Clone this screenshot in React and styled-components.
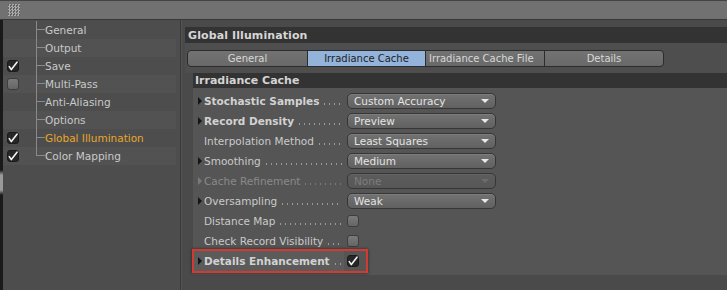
import React from "react";
import styled, { createGlobalStyle, css } from "styled-components";

const Global = createGlobalStyle`
  html, body { margin: 0; padding: 0; background: #4a4a4a; overflow: hidden; }
  * { box-sizing: border-box; }
`;

const Frame = styled.div`
  width: 727px;
  height: 290px;
  display: flex;
  flex-direction: column;
  font-family: "DejaVu Sans", "Liberation Sans", sans-serif;
  font-size: 10px;
  color: #cfcfcf;
  background: #4a4a4a;
`;

const TitleBar = styled.div`
  height: 20px;
  flex: none;
  background: #717171;
  border-top: 1px solid #444;
  border-bottom: 1px solid #383838;
  display: flex;
  align-items: center;
  padding-left: 8px;
`;

const Grip = styled.div`
  width: 12px;
  height: 12px;
  background-image: repeating-conic-gradient(#b4b4b4 0 25%, #5e5e5e 0 50%);
  background-size: 3px 3px;
  opacity: 0.85;
`;

const Main = styled.div`
  flex: 1;
  display: flex;
  min-height: 0;
`;

const LeftEdge = styled.div`
  width: 3px;
  flex: none;
  background: linear-gradient(#1a1a1a 0 150px, #9a9a9a 155px 170px, #1a1a1a 175px);
`;

const Sidebar = styled.div`
  width: 178px;
  flex: none;
  background: #4d4d4d;
  border-right: 1px solid #393939;
  padding-top: 1px;
  display: flex;
  flex-direction: column;
`;

const TreeRow = styled.div`
  height: 18px;
  display: flex;
  align-items: center;
  background: ${(p) => (p.$odd ? "#525252" : "#4d4d4d")};
  margin-right: 4px;
`;

const CheckCell = styled.div`
  width: 33px;
  flex: none;
  display: flex;
  align-items: center;
  padding-left: 4px;
`;

const Branch = styled.div`
  position: relative;
  width: 9px;
  height: 18px;
  flex: none;
  border-left: 1px solid #8a8a8a;
  ${(p) =>
    p.$last &&
    css`
      height: 9px;
      align-self: flex-start;
    `}
  &::after {
    content: "";
    position: absolute;
    left: 0;
    top: 8px;
    width: 8px;
    border-top: 1px solid #8a8a8a;
  }
`;

const TreeLabel = styled.span`
  color: ${(p) => (p.$active ? "#e9a62a" : "#c9c9c9")};
  font-size: 10.5px;
  white-space: nowrap;
`;

const Box = styled.div`
  position: relative;
  width: 12px;
  height: 12px;
  border-radius: 3px;
  flex: none;
  display: flex;
  align-items: center;
  justify-content: center;
  ${(p) =>
    p.$checked
      ? css`
          background: #262626;
          border: 1px solid #1a1a1a;
        `
      : css`
          background: linear-gradient(#7a7a7a, #666);
          border: 1px solid #3d3d3d;
        `}
`;

const Check = () => (
  <svg width="10" height="10" viewBox="0 0 10 10">
    <path d="M1.3 5.6 L3.3 8.6 L9 1.2" stroke="#f2f2f2" strokeWidth="1.6" fill="none" strokeLinecap="round" strokeLinejoin="round" />
  </svg>
);

const RightPanel = styled.div`
  flex: 1;
  display: flex;
  flex-direction: column;
  padding: 7px 0 0 3px;
  background: #4a4a4a;
  border-left: 1px solid #545454;
`;

const Header = styled.div`
  height: 16px;
  background: #333;
  color: #d6d6d6;
  font-size: 11px;
  font-weight: bold;
  display: flex;
  align-items: center;
  padding-left: 3px;
  letter-spacing: 0.1px;
`;

const TabStrip = styled.div`
  display: flex;
  padding: 7px 0 6px 3px;
  background: #4e4e4e;
`;

const Tab = styled.div`
  width: ${(p) => p.$w}px;
  height: 17px;
  display: flex;
  align-items: center;
  justify-content: ${(p) => (p.$left ? "flex-start" : "center")};
  padding-left: ${(p) => (p.$left ? "3px" : "0")};
  border: 1px solid #2c2c2c;
  margin-left: -1px;
  background: ${(p) => (p.$sel ? "#93b3da" : "linear-gradient(#737373, #686868)")};
  color: ${(p) => (p.$sel ? "#1e1e1e" : "#d8d8d8")};
  white-space: nowrap;
  ${(p) => p.$first && css`border-radius: 4px 0 0 4px;`}
  ${(p) => p.$last && css`border-radius: 0 4px 4px 0;`}
`;

const Section = styled.div`
  margin-left: 8px;
  display: flex;
  flex-direction: column;
`;

const SectionHeader = styled.div`
  height: 15px;
  background: #333;
  color: #d4d4d4;
  font-size: 11px;
  font-weight: bold;
  display: flex;
  align-items: center;
  padding-left: 2px;
`;

const Content = styled.div`
  height: 187px;
  background: #555;
  padding-top: 3px;
  display: flex;
  flex-direction: column;
`;

const Row = styled.div`
  position: relative;
  height: 20px;
  display: flex;
  align-items: center;
  padding-left: 5px;
`;

const Twisty = styled.div`
  position: relative;
  width: 0;
  height: 0;
  border-top: 4px solid transparent;
  border-bottom: 4px solid transparent;
  border-left: 4px solid ${(p) => (p.$dim ? "#7a7a7a" : "#151515")};
  visibility: ${(p) => (p.$hide ? "hidden" : "visible")};
  margin-right: 2px;
  flex: none;
`;

const LabelCell = styled.div`
  position: relative;
  width: 143px;
  flex: none;
  display: flex;
  align-items: baseline;
  padding-right: 5px;
  overflow: hidden;
`;

const LabelText = styled.span`
  white-space: nowrap;
  font-size: 10.5px;
  font-weight: ${(p) => (p.$bold ? "bold" : "normal")};
  color: ${(p) => (p.$dim ? "#8a8a8a" : p.$bold ? "#d2d2d2" : "#cacaca")};
`;

const Leader = styled.span`
  flex: 1;
  height: 2px;
  margin-left: 3px;
  background-image: radial-gradient(circle, ${(p) => (p.$dim ? "#777" : "#9a9a9a")} 0 0.7px, transparent 0.9px);
  background-size: 5px 2px;
  background-repeat: repeat-x;
  background-position: left center;
`;

const Dropdown = styled.div`
  width: 149px;
  height: 16px;
  border-radius: 5px;
  border: 1px solid #363636;
  background: ${(p) => (p.$disabled ? "linear-gradient(#5c5c5c, #575757)" : "linear-gradient(#727272, #616161)")};
  box-shadow: inset 0 1px 0 ${(p) => (p.$disabled ? "#636363" : "#7d7d7d")};
  display: flex;
  align-items: center;
  justify-content: space-between;
  padding: 0 6px 0 6px;
  color: ${(p) => (p.$disabled ? "#7d7d7d" : "#e4e4e4")};
  font-size: 10.5px;
`;

const Arrow = styled.div`
  width: 0;
  height: 0;
  border-left: 4px solid transparent;
  border-right: 4px solid transparent;
  border-top: 4px solid ${(p) => (p.$disabled ? "#6c6c6c" : "#eaeaea")};
`;

const Highlight = styled.div`
  position: absolute;
  left: -1px;
  top: -2px;
  width: 176px;
  height: 24px;
  border: 2px solid #d23b31;
  box-shadow: 0 0 3px rgba(0, 0, 0, 0.5);
  pointer-events: none;
`;

const HighlightFill = styled.div`
  position: absolute;
  left: 1px;
  top: 0;
  width: 150px;
  height: 20px;
  background: #5b5b5b;
`;

const tree = [
  { label: "General" },
  { label: "Output" },
  { label: "Save", box: "on" },
  { label: "Multi-Pass", box: "off" },
  { label: "Anti-Aliasing" },
  { label: "Options" },
  { label: "Global Illumination", box: "on", active: true },
  { label: "Color Mapping", box: "on" },
];

const tabs = [
  { label: "General", w: 121 },
  { label: "Irradiance Cache", w: 119, sel: true },
  { label: "Irradiance Cache File", w: 120, left: true },
  { label: "Details", w: 120 },
];

const rows = [
  { label: "Stochastic Samples", bold: true, twisty: true, dd: "Custom Accuracy" },
  { label: "Record Density", bold: true, twisty: true, dd: "Preview" },
  { label: "Interpolation Method", dd: "Least Squares" },
  { label: "Smoothing", twisty: true, dd: "Medium" },
  { label: "Cache Refinement", twisty: true, dim: true, dd: "None", disabled: true },
  { label: "Oversampling", twisty: true, dd: "Weak" },
  { label: "Distance Map", cb: "off" },
  { label: "Check Record Visibility", cb: "off" },
  { label: "Details Enhancement", bold: true, twisty: true, cb: "on", hl: true },
];

export default function App() {
  return (
    <Frame>
      <Global />
      <TitleBar>
        <Grip />
      </TitleBar>
      <Main>
        <LeftEdge />
        <Sidebar>
          {tree.map((t, i) => (
            <TreeRow key={t.label} $odd={i % 2 === 1}>
              <CheckCell>
                {t.box && (
                  <Box $checked={t.box === "on"}>{t.box === "on" && <Check />}</Box>
                )}
              </CheckCell>
              <Branch $last={i === tree.length - 1} />
              <TreeLabel $active={t.active}>{t.label}</TreeLabel>
            </TreeRow>
          ))}
        </Sidebar>
        <RightPanel>
          <Header>Global Illumination</Header>
          <TabStrip>
            {tabs.map((t, i) => (
              <Tab
                key={t.label}
                $w={t.w}
                $sel={t.sel}
                $left={t.left}
                $first={i === 0}
                $last={i === tabs.length - 1}
              >
                {t.label}
              </Tab>
            ))}
          </TabStrip>
          <Section>
            <SectionHeader>Irradiance Cache</SectionHeader>
            <Content>
              {rows.map((r) => (
                <Row key={r.label}>
                  {r.hl && <HighlightFill />}
                  <Twisty $hide={!r.twisty} $dim={r.dim} />
                  <LabelCell>
                    <LabelText $bold={r.bold} $dim={r.dim}>{r.label}</LabelText>
                    <Leader $dim={r.dim} />
                  </LabelCell>
                  {r.dd && (
                    <Dropdown $disabled={r.disabled}>
                      <span>{r.dd}</span>
                      <Arrow $disabled={r.disabled} />
                    </Dropdown>
                  )}
                  {r.cb && (
                    <Box $checked={r.cb === "on"}>
                      {r.cb === "on" && <Check />}
                    </Box>
                  )}
                  {r.hl && <Highlight />}
                </Row>
              ))}
            </Content>
          </Section>
        </RightPanel>
      </Main>
    </Frame>
  );
}
